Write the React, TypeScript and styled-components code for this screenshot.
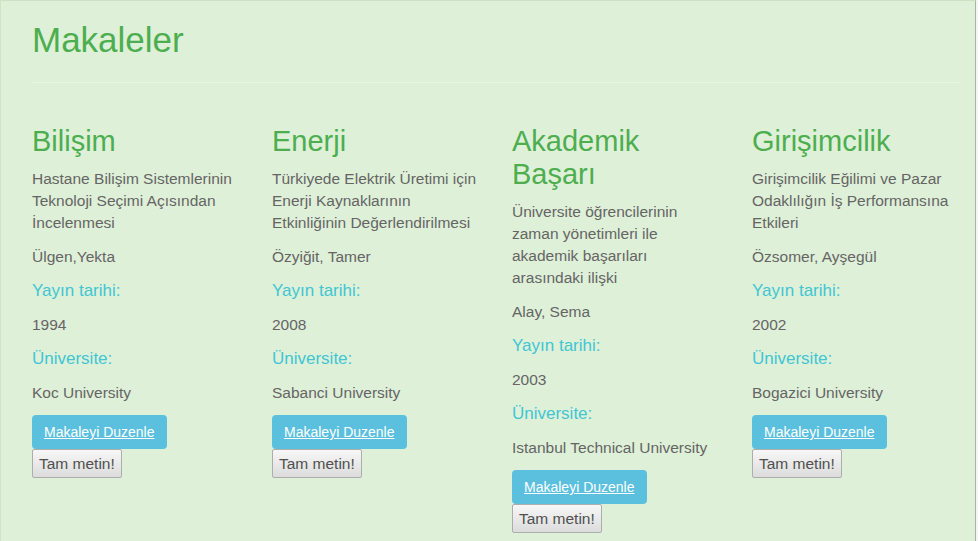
import React from "react";
import styled, { createGlobalStyle } from "styled-components";

const Global = createGlobalStyle`
  html, body { margin: 0; padding: 0; background: #f3f6f2; }
  body { font-family: "Liberation Sans", Arial, sans-serif; }
  * { box-sizing: border-box; }
`;

const Frame = styled.div`
  width: 976px;
  min-height: 541px;
  background: #dff0d8;
  border-top: 1px solid #cde2c5;
  border-left: 1px solid #cfe3c7;
  border-right: 1px solid #a9b3a6;
  padding: 20px 0 0 31px;
`;

const Header = styled.div`
  width: 928px;
  padding-bottom: 23px;
  border-bottom: 1px solid #e9f5e5;
  margin-bottom: 42px;
`;

const Title = styled.h1`
  margin: 0;
  font-size: 35px;
  line-height: 38px;
  font-weight: 400;
  color: #4cae4f;
`;

const Grid = styled.div`
  display: grid;
  grid-template-columns: repeat(4, 240px);
  align-items: start;
`;

const Card = styled.div`
  padding-right: 32px;
  display: flex;
  flex-direction: column;
  align-items: flex-start;
`;

const Topic = styled.h2`
  margin: 0 0 10px;
  font-size: 29px;
  line-height: 33px;
  font-weight: 400;
  color: #4cae4f;
`;

const Text = styled.p<{ $last?: boolean }>`
  margin: 0 0 ${(p) => (p.$last ? "11px" : "12px")};
  font-size: 15.5px;
  line-height: 22px;
  color: #656565;
`;

const Label = styled.p`
  margin: 0 0 12px;
  font-size: 17px;
  line-height: 22px;
  color: #3fc6d3;
`;

const EditButton = styled.a`
  display: inline-flex;
  align-items: center;
  height: 34px;
  padding: 0 12px;
  background: #5bc0de;
  border-radius: 4px;
  color: #fff;
  font-size: 14px;
  text-decoration: underline;
  cursor: pointer;
`;

const FullButton = styled.button`
  height: 29px;
  padding: 0 6px;
  border: 1px solid #adadad;
  border-radius: 2px;
  background: linear-gradient(#f7f7f7, #dcdcdc);
  font-family: "Liberation Sans", Arial, sans-serif;
  font-size: 15.5px;
  color: #505050;
`;

type Article = {
  topic: string[];
  title: string;
  author: string;
  year: string;
  university: string;
};

const articles: Article[] = [
  {
    topic: ["Bilişim"],
    title: "Hastane Bilişim Sistemlerinin Teknoloji Seçimi Açısından İncelenmesi",
    author: "Ülgen,Yekta",
    year: "1994",
    university: "Koc University",
  },
  {
    topic: ["Enerji"],
    title: "Türkiyede Elektrik Üretimi için Enerji Kaynaklarının Etkinliğinin Değerlendirilmesi",
    author: "Özyiğit, Tamer",
    year: "2008",
    university: "Sabanci University",
  },
  {
    topic: ["Akademik", "Başarı"],
    title: "Üniversite öğrencilerinin zaman yönetimleri ile akademik başarıları arasındaki ilişki",
    author: "Alay, Sema",
    year: "2003",
    university: "Istanbul Technical University",
  },
  {
    topic: ["Girişimcilik"],
    title: "Girişimcilik Eğilimi ve Pazar Odaklılığın İş Performansına Etkileri",
    author: "Özsomer, Ayşegül",
    year: "2002",
    university: "Bogazici University",
  },
];

export default function App() {
  return (
    <>
      <Global />
      <Frame>
        <Header>
          <Title>Makaleler</Title>
        </Header>
        <Grid>
          {articles.map((a) => (
            <Card key={a.title}>
              <Topic>
                {a.topic.map((t, i) => (
                  <React.Fragment key={t}>
                    {i > 0 && <br />}
                    {t}
                  </React.Fragment>
                ))}
              </Topic>
              <Text>{a.title}</Text>
              <Text>{a.author}</Text>
              <Label>Yayın tarihi:</Label>
              <Text>{a.year}</Text>
              <Label>Üniversite:</Label>
              <Text $last>{a.university}</Text>
              <EditButton>Makaleyi Duzenle</EditButton>
              <FullButton>Tam metin!</FullButton>
            </Card>
          ))}
        </Grid>
      </Frame>
    </>
  );
}
